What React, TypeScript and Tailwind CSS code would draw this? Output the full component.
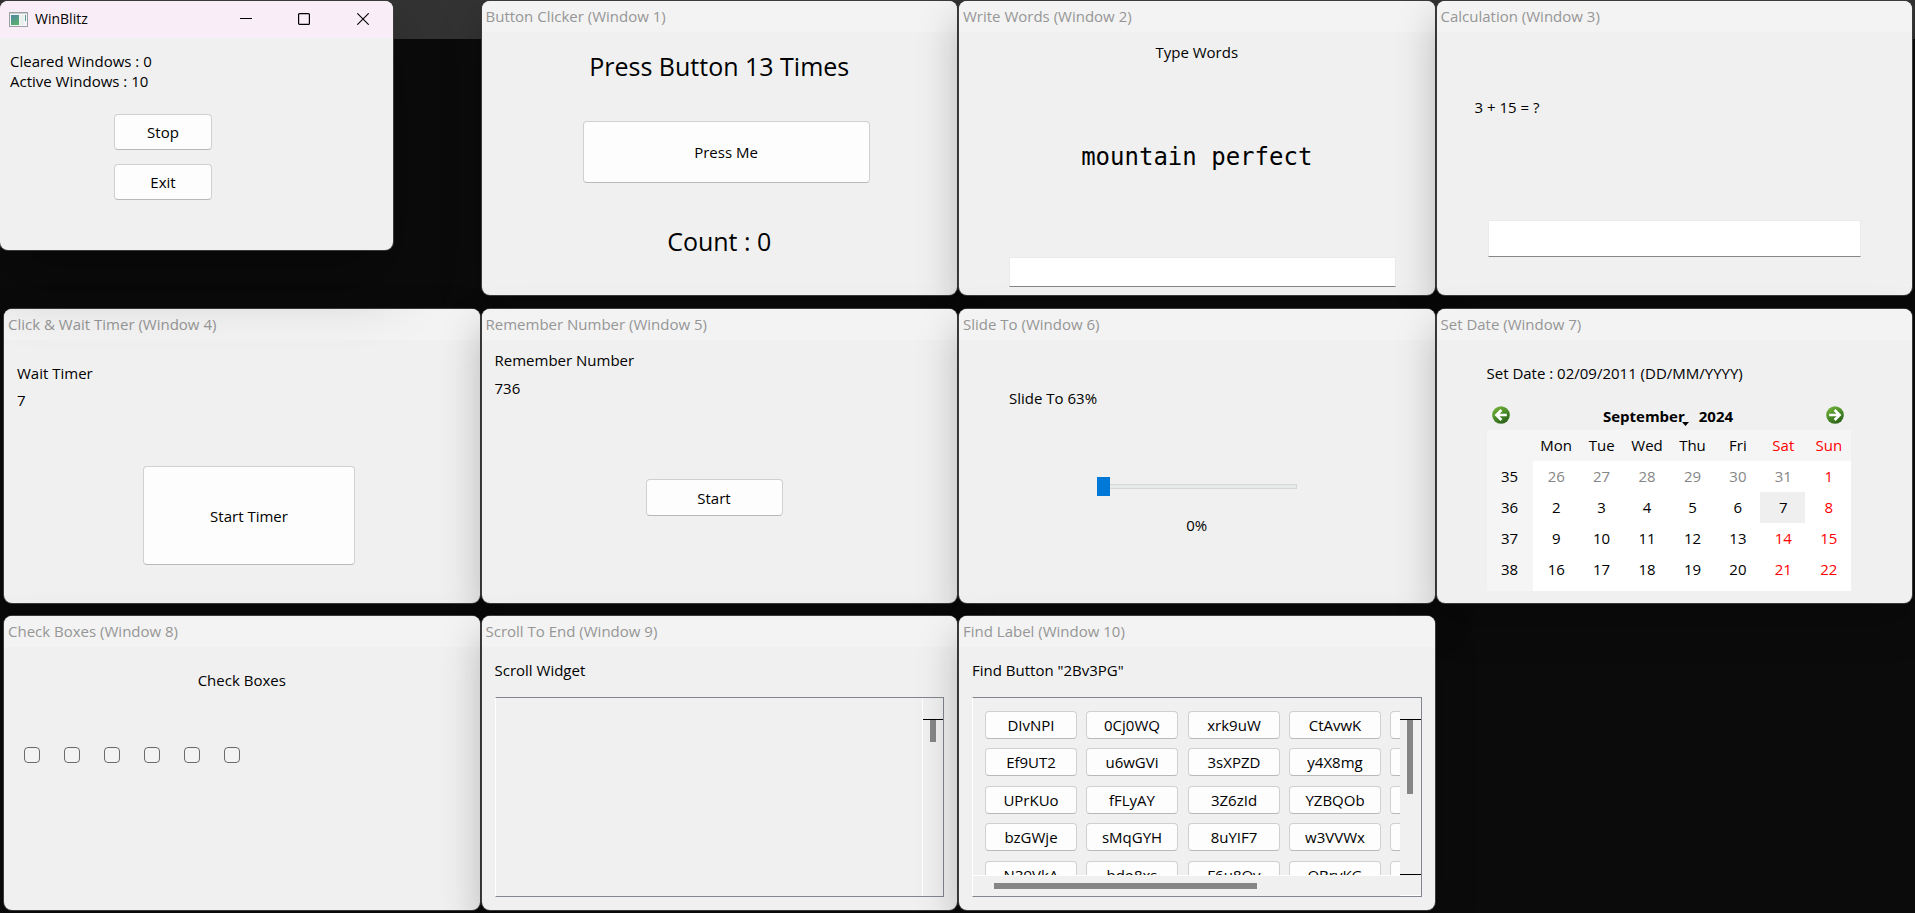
import React, { useState } from 'react'

const cx = (...parts: (string | undefined)[]) => parts.filter(Boolean).join(' ')

function PushButton({ className, children }: { className?: string; children: React.ReactNode }) {
  return (
    <button
      type="button"
      className={cx(
        'flex shrink-0 items-center justify-center rounded border border-[#d0d0d0] border-b-[#b9b9b9] bg-[#fdfdfd] text-black',
        className,
      )}
    >
      {children}
    </button>
  )
}

function LineEdit({ label, className }: { label: string; className: string }) {
  return (
    <input
      type="text"
      aria-label={label}
      className={cx('border border-[#ebebeb] border-b-[#868686] bg-white px-2 outline-none', className)}
    />
  )
}

function ToolWindow({ title, children }: { title: string; children: React.ReactNode }) {
  return (
    <section className="relative flex h-[294px] flex-col overflow-clip rounded-lg bg-[#f0f0f0] shadow-[0_0_0_1px_#3a3a3a,0_18px_40px_rgba(0,0,0,0.25)]">
      <h2 className="flex h-[31px] shrink-0 items-center bg-[#f3f3f3] px-1 pb-[2px] text-[#969696]">{title}</h2>
      <div className="flex min-h-0 flex-1 flex-col">{children}</div>
    </section>
  )
}

function AppIcon() {
  return (
    <svg width="19" height="15" viewBox="0 0 19 15" aria-hidden="true">
      <defs>
        <linearGradient id="app-a" x1="0" y1="0" x2="0.4" y2="1">
          <stop offset="0" stopColor="#4f86a8" />
          <stop offset="1" stopColor="#5aae6e" />
        </linearGradient>
      </defs>
      <rect x="0.5" y="0.5" width="18" height="14" fill="#f4f6f6" stroke="#9aa0a4" />
      <rect x="1" y="1" width="17" height="1" fill="#c9ced1" />
      <rect x="2" y="3" width="8" height="10" fill="url(#app-a)" />
      <rect x="11" y="3" width="4" height="10" fill="#e9efee" />
      <rect x="16" y="3" width="1" height="6" fill="#5c9c98" />
    </svg>
  )
}

function MainWindow() {
  return (
    <section className="relative z-20 -ml-1 flex h-[249px] w-[393px] flex-col overflow-clip rounded-lg bg-[#f0f0f0] shadow-[0_0_0_1px_#3a3a3a,0_32px_64px_rgba(0,0,0,0.28)]">
      <header className="flex h-[37px] shrink-0 items-center bg-[#f9eef7] pb-px pl-[9px]">
        <AppIcon />
        <h1 className="ml-[7px] flex-1 text-sm">WinBlitz</h1>
        <button type="button" aria-label="Minimize" className="flex h-full w-[58px] items-center justify-center">
          <svg width="12" height="12" viewBox="0 0 12 12" stroke="#000" fill="none">
            <path d="M0 5.5H12" />
          </svg>
        </button>
        <button type="button" aria-label="Maximize" className="flex h-full w-[58px] items-center justify-center">
          <svg width="12" height="12" viewBox="0 0 12 12" stroke="#000" fill="none">
            <rect x="0.6" y="0.6" width="10.8" height="10.8" rx="1" strokeWidth="1.2" />
          </svg>
        </button>
        <button type="button" aria-label="Close" className="flex h-full w-[60px] items-center justify-center">
          <svg width="12" height="12" viewBox="0 0 12 12" stroke="#000" strokeWidth="1.1" fill="none">
            <path d="M0.3 0.3L11.7 11.7M11.7 0.3L0.3 11.7" />
          </svg>
        </button>
      </header>
      <div className="flex flex-1 flex-col px-[10px] pt-[13px]">
        <p>Cleared Windows : 0</p>
        <p>Active Windows : 10</p>
        <div className="mt-[23px] ml-[104px] flex flex-col gap-[14px]">
          <PushButton className="h-9 w-[98px]">Stop</PushButton>
          <PushButton className="h-9 w-[98px]">Exit</PushButton>
        </div>
      </div>
    </section>
  )
}

function ArrowIcon({ flip }: { flip?: boolean }) {
  const id = flip ? 'arrow-next' : 'arrow-prev'
  return (
    <svg width="18" height="18" viewBox="0 0 18 18" aria-hidden="true">
      <defs>
        <linearGradient id={id} x1="0" y1="0" x2="0.6" y2="1">
          <stop offset="0" stopColor="#7fb93c" />
          <stop offset="0.5" stopColor="#4f932a" />
          <stop offset="1" stopColor="#2c6318" />
        </linearGradient>
      </defs>
      <circle cx="9" cy="9" r="8.8" fill={`url(#${id})`} />
      <path
        d={flip ? 'M3.2 9H13.6M8.6 4L13.6 9L8.6 14' : 'M14.8 9H4.4M9.4 4L4.4 9L9.4 14'}
        stroke="#fff"
        strokeWidth="2.6"
        fill="none"
      />
    </svg>
  )
}

const weekDays = ['Mon', 'Tue', 'Wed', 'Thu', 'Fri', 'Sat', 'Sun']
const weeks = [
  { no: 35, days: [26, 27, 28, 29, 30, 31, 1] },
  { no: 36, days: [2, 3, 4, 5, 6, 7, 8] },
  { no: 37, days: [9, 10, 11, 12, 13, 14, 15] },
  { no: 38, days: [16, 17, 18, 19, 20, 21, 22] },
]

function dayClass(week: number, col: number) {
  if (week === 35 && col < 6) return 'text-[#868686]'
  if (week === 36 && col === 5) return 'bg-[#efefef]'
  return col > 4 ? 'text-[#ff0000]' : ''
}

function Calendar() {
  return (
    <div className="mt-5 w-[364px]">
      <div className="flex h-[27px] items-center justify-between pr-[6px] pl-[5px]">
        <button type="button" aria-label="Previous month" className="mb-1">
          <ArrowIcon />
        </button>
        <div className="flex items-center gap-[14px] pb-[2px] font-bold">
          <button type="button" aria-label="Month" className="relative">
            September
            <svg width="7" height="4" viewBox="0 0 7 4" className="absolute -right-1 bottom-0" aria-hidden="true">
              <path d="M0 0H7L3.5 4Z" />
            </svg>
          </button>
          <button type="button" aria-label="Year">
            2024
          </button>
        </div>
        <button type="button" aria-label="Next month" className="mb-1">
          <ArrowIcon flip />
        </button>
      </div>
      <div className="bg-[linear-gradient(90deg,#f5f5f5_46px,#fff_46px)] pb-[6px]">
        <table className="w-full table-fixed border-collapse text-center">
          <thead>
            <tr className="h-[31px] bg-[#f5f5f5]">
              <td className="w-[46px]" />
              {weekDays.map((d, i) => (
                <th key={d} scope="col" className={cx('p-0 pb-[2px] pl-[2px] font-normal', i > 4 ? 'text-[#ff0000]' : '')}>
                  {d}
                </th>
              ))}
            </tr>
          </thead>
          <tbody>
            {weeks.map((w) => (
              <tr key={w.no} className="h-[31px]">
                <th scope="row" className="p-0 pb-[2px] font-normal">
                  {w.no}
                </th>
                {w.days.map((d, i) => (
                  <td key={d} className={cx('p-0 pb-[2px] pl-[2px]', dayClass(w.no, i))}>
                    {d}
                  </td>
                ))}
              </tr>
            ))}
          </tbody>
        </table>
      </div>
    </div>
  )
}

const labels = [
  ['DIvNPI', '0Cj0WQ', 'xrk9uW', 'CtAvwK', ''],
  ['Ef9UT2', 'u6wGVi', '3sXPZD', 'y4X8mg', ''],
  ['UPrKUo', 'fFLyAY', '3Z6zId', 'YZBQOb', ''],
  ['bzGWje', 'sMqGYH', '8uYIF7', 'w3VVWx', ''],
  ['N39VkA', 'bdo8xs', 'F6u8Qv', 'QBrvKG', ''],
]

function SlideTo() {
  const [value, setValue] = useState(0)
  return (
    <>
      <label htmlFor="slide" className="mt-12 ml-[50px]">
        Slide To 63%
      </label>
      <input
        id="slide"
        type="range"
        min={0}
        max={100}
        value={value}
        onChange={(e) => setValue(Number(e.target.value))}
        className="mt-[69px] ml-[138px] h-[19px] w-[200px] appearance-none bg-transparent [&::-webkit-slider-runnable-track]:h-[5px] [&::-webkit-slider-runnable-track]:border [&::-webkit-slider-runnable-track]:border-[#d6d6d6] [&::-webkit-slider-runnable-track]:bg-[#e7eaea] [&::-webkit-slider-thumb]:-mt-2 [&::-webkit-slider-thumb]:-ml-px [&::-webkit-slider-thumb]:h-[19px] [&::-webkit-slider-thumb]:w-[13px] [&::-webkit-slider-thumb]:appearance-none [&::-webkit-slider-thumb]:bg-[#0078d7]"
      />
      <output htmlFor="slide" className="mt-[19px] text-center">
        {value}%
      </output>
    </>
  )
}

export default function App() {
  return (
    <main className="min-h-screen bg-[linear-gradient(#333_39px,#0b0b0b_39px)] pt-px pr-[3px] pb-[3px] pl-1 font-['Open_Sans','Noto_Sans',sans-serif] text-[15px] leading-5 text-black">
      <div className="grid grid-cols-4 grid-rows-[295px_294px_294px] gap-x-[2px] gap-y-[13px]">
        <MainWindow />

        <ToolWindow title="Button Clicker (Window 1)">
          <p className="mt-[18px] text-center text-[25px] leading-8">Press Button 13 Times</p>
          <PushButton className="mt-[39px] ml-[101px] h-[62px] w-[287px]">Press Me</PushButton>
          <p className="mt-[42px] text-center text-[25px] leading-8">Count : 0</p>
        </ToolWindow>

        <ToolWindow title="Write Words (Window 2)">
          <p className="mt-[10px] text-center">Type Words</p>
          <p className="mt-[79px] text-center font-['DejaVu_Sans_Mono',monospace] text-2xl">mountain perfect</p>
          <LineEdit label="Type Words" className="mt-[84px] ml-[50px] h-[30px] w-[387px]" />
        </ToolWindow>

        <ToolWindow title="Calculation (Window 3)">
          <label className="flex flex-col">
            <span className="mt-[65px] ml-[38px]">3 + 15 = ?</span>
            <LineEdit label="Answer" className="mt-[103px] ml-[51px] h-[37px] w-[373px]" />
          </label>
        </ToolWindow>

        <ToolWindow title="Click & Wait Timer (Window 4)">
          <p className="mt-[23px] ml-[13px]">Wait Timer</p>
          <p className="mt-[7px] ml-[13px]">7</p>
          <PushButton className="mt-14 ml-[139px] h-[99px] w-[212px]">Start Timer</PushButton>
        </ToolWindow>

        <ToolWindow title="Remember Number (Window 5)">
          <p className="mt-[10px] ml-[13px]">Remember Number</p>
          <p className="mt-2 ml-[13px]">736</p>
          <PushButton className="mt-[81px] ml-[164px] h-[37px] w-[137px]">Start</PushButton>
        </ToolWindow>

        <ToolWindow title="Slide To (Window 6)">
          <SlideTo />
        </ToolWindow>

        <ToolWindow title="Set Date (Window 7)">
          <div className="ml-[50px]">
            <p className="mt-[23px]">Set Date : 02/09/2011 (DD/MM/YYYY)</p>
            <Calendar />
          </div>
        </ToolWindow>

        <ToolWindow title="Check Boxes (Window 8)">
          <p className="mt-[23px] text-center">Check Boxes</p>
          <div className="mt-[57px] ml-5 flex gap-6">
            {[1, 2, 3, 4, 5, 6].map((n) => (
              <input
                key={n}
                type="checkbox"
                aria-label={`Box ${n}`}
                className="size-4 appearance-none rounded border border-[#6a6a6a] bg-[#f3f3f3] checked:bg-[#0078d7]"
              />
            ))}
          </div>
        </ToolWindow>

        <ToolWindow title="Scroll To End (Window 9)">
          <p className="mt-[13px] ml-[13px]">Scroll Widget</p>
          <div className="mt-[17px] mr-[13px] ml-[13px] flex h-[200px] border border-[#82878f] border-l-white">
            <div className="flex-1" />
            <div className="w-[21px] border-l border-white">
              <div className="mt-[21px] border-t border-black">
                <div className="mx-auto h-[22px] w-[6px] bg-[#868686]" />
              </div>
            </div>
          </div>
        </ToolWindow>

        <ToolWindow title="Find Label (Window 10)">
          <p className="mt-[13px] ml-[13px]">Find Button "2Bv3PG"</p>
          <div className="mt-[17px] mr-[13px] ml-[13px] flex h-[200px] border border-[#82878f] border-l-white">
            <div className="flex min-w-0 flex-1 flex-col">
              <div className="h-[177px] overflow-hidden">
                <div className="grid grid-cols-[101px_102px_101px_101px_92px] grid-rows-[37px_38px_37px_38px_28px] items-start pt-[13px] pl-3">
                  {labels.flat().map((text, i) => (
                    <PushButton key={i} className="h-7 w-[92px]">
                      {text}
                    </PushButton>
                  ))}
                </div>
              </div>
              <div className="flex flex-1 items-center border-t border-white pl-[21px]">
                <div className="h-[6px] w-[263px] bg-[#868686]" />
              </div>
            </div>
            <div className="flex w-[21px] flex-col justify-between border-b border-white pt-[21px]">
              <div className="h-[156px] border-y border-black">
                <div className="mx-auto h-[74px] w-[6px] bg-[#868686]" />
              </div>
            </div>
          </div>
        </ToolWindow>
      </div>
    </main>
  )
}
